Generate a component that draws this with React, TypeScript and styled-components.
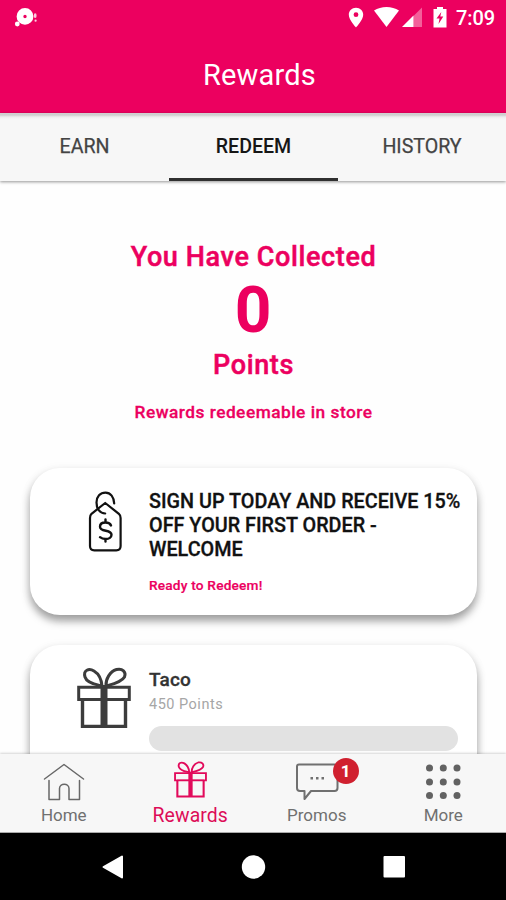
import React from 'react';
import styled, { createGlobalStyle } from 'styled-components';

const PINK = '#ec005f';

const GlobalStyle = createGlobalStyle`
  * { box-sizing: border-box; }
  body { margin: 0; background: #fff; font-family: Roboto, 'Liberation Sans', sans-serif; }
`;

const Screen = styled.div`
  width: 506px;
  height: 900px;
  display: flex;
  flex-direction: column;
  overflow: hidden;
  background: #fefefe;
`;

const Header = styled.header`
  flex: 0 0 113px;
  background: ${PINK};
  color: #fff;
`;

const StatusBar = styled.div`
  height: 36px;
  display: flex;
  justify-content: space-between;
`;

const StatusGroup = styled.div`
  display: flex;
  align-items: center;
`;

const Clock = styled.span`
  width: 50px;
  font-size: 20px;
  font-weight: 500;
  line-height: 37px;
  letter-spacing: -0.1px;
`;

const Title = styled.h1`
  margin: 0;
  padding-left: 13px;
  height: 77px;
  line-height: 78px;
  text-align: center;
  font-size: 29px;
  font-weight: 400;
  letter-spacing: 0.2px;
`;

const Tabs = styled.nav`
  flex: 0 0 68px;
  display: grid;
  grid-template-columns: 169px 169px 168px;
  background: linear-gradient(#d2d2d2 0, #cfcfcf 2px, #eee 4px, #f7f7f7 6px);
  box-shadow: 0 1px 3px rgba(0, 0, 0, 0.42);
  z-index: 1;
`;

const Tab = styled.div<{ $active?: boolean }>`
  height: 68px;
  text-align: center;
  line-height: 67px;
  font-size: 19.6px;
  font-weight: ${(p) => (p.$active ? 500 : 400)};
  color: ${(p) => (p.$active ? '#161616' : '#444')};
  -webkit-text-stroke: ${(p) => (p.$active ? '0' : '0.25px #444')};
  border-bottom: 3px solid ${(p) => (p.$active ? '#303030' : 'transparent')};
`;

const Content = styled.main`
  flex: 1;
  min-height: 0;
  overflow: hidden;
`;

const Summary = styled.section`
  height: 287px;
  padding-top: 59px;
  display: flex;
  flex-direction: column;
  align-items: center;
  color: ${PINK};
`;

const SummaryLine = styled.div`
  height: 34px;
  padding-left: 1px;
  line-height: 34px;
  font-size: 27px;
  font-weight: 500;
  letter-spacing: 0.62px;
  -webkit-text-stroke: 0.5px ${PINK};
`;

const Score = styled.div`
  height: 74px;
  line-height: 73px;
  font-size: 64px;
  font-weight: 700;
`;

const Hint = styled.div`
  margin-top: 13px;
  height: 34px;
  padding-left: 1px;
  line-height: 35px;
  font-size: 17.3px;
  font-weight: 500;
  letter-spacing: 0.5px;
  -webkit-text-stroke: 0.3px ${PINK};
`;

const Card = styled.article`
  display: flex;
  height: 147px;
  margin: 0 29px 30px 30px;
  border-radius: 30px;
  background: #fff;
  box-shadow: 0 6px 9px rgba(0, 0, 0, 0.36), 0 2px 12px rgba(0, 0, 0, 0.06);
`;

const CardIcon = styled.div`
  flex: 0 0 119px;
  padding: 22px 0 0 47px;
`;

const CardBody = styled.div`
  flex: 1;
  padding-top: 22px;
`;

const OfferTitle = styled.h2`
  margin: 0;
  width: 316px;
  font-size: 19.8px;
  line-height: 24px;
  font-weight: 500;
  color: #111;
  -webkit-text-stroke: 0.3px #111;
`;

const Ready = styled.div`
  margin-top: 13px;
  line-height: 20px;
  font-size: 13.7px;
  letter-spacing: 0.18px;
  font-weight: 500;
  color: ${PINK};
  -webkit-text-stroke: 0.2px ${PINK};
`;

const RewardTitle = styled.h2`
  margin: 0;
  font-size: 19px;
  line-height: 25px;
  font-weight: 500;
  color: #333;
  letter-spacing: 0.2px;
  -webkit-text-stroke: 0.3px #333;
`;

const Cost = styled.div`
  margin-top: 2px;
  line-height: 21px;
  font-size: 14.5px;
  letter-spacing: 0.5px;
  color: #a6a6a6;
`;

const Progress = styled.div`
  margin-top: 11px;
  width: 309px;
  height: 25px;
  border-radius: 13px;
  background: #e2e2e2;
`;

const BottomNav = styled.nav`
  flex: 0 0 79px;
  display: grid;
  grid-template-columns: repeat(4, 1fr);
  background: #f7f7f7;
  border-bottom: 1px solid #aaa;
  box-shadow: 0 -1px 2px rgba(0, 0, 0, 0.16);
  z-index: 1;
`;

const NavItem = styled.div<{ $active?: boolean }>`
  display: flex;
  flex-direction: column;
  align-items: center;
  padding-left: 1px;
  color: ${(p) => (p.$active ? '#dd0c58' : '#707070')};
  font-size: ${(p) => (p.$active ? '19.4px' : '17px')};
  letter-spacing: ${(p) => (p.$active ? '0.1px' : '0')};
  line-height: 25px;
`;

const NavIcon = styled.div`
  position: relative;
  height: 49px;
  width: 80px;
`;

const Badge = styled.span`
  position: absolute;
  left: 56px;
  top: 4px;
  width: 26px;
  height: 26px;
  border-radius: 50%;
  background: #d0202f;
  color: #fff;
  text-align: center;
  font-size: 17px;
  font-weight: 700;
  line-height: 26px;
`;

const SystemBar = styled.footer`
  flex: 0 0 67px;
  background: #000;
  display: flex;
  align-items: center;
  justify-content: center;
  gap: 117px;
`;

const Drawing = styled.svg`
  display: block;
  overflow: visible;
`;

const NotificationMark = () => (
  <Drawing width="40" height="36" fill="#fff">
    <path fillRule="evenodd" d="M25 8a8.4 8.4 0 1 0 0 16.8A8.4 8.4 0 0 0 25 8zm0 6.8a1.7 1.7 0 1 1 0 3.4 1.7 1.7 0 0 1 0-3.4z" />
    <circle cx="17.3" cy="24" r="2.4" />
    <ellipse cx="35.2" cy="15.7" rx="1.4" ry="2.4" opacity="0.8" />
    <circle cx="35.6" cy="20.7" r="1.1" opacity="0.8" />
  </Drawing>
);

const StatusIcons = () => (
  <Drawing width="108" height="36" fill="#fff">
    <path fillRule="evenodd" d="M8 7.7c-4.1 0-7.2 3-7.2 7C.8 20 8 27.4 8 27.4s7.2-7.4 7.2-12.700c0-4-3.100-7-7.200-7zm0 4.600a2.400 2.400 0 1 1 0 4.800 2.400 2.400 0 0 1 0-4.800z" />
    <path d="M26 10.5C33 5.7 44 5.7 51 10.5L38.5 27z" />
    <path d="M74 7.500V27H54z" opacity="0.1" />
    <path d="M65.500 16 74 7.500V27h-8.500z" opacity="0.3" />
    <path d="M65.500 15.500V27H54z" />
    <path fillRule="evenodd" d="M85.500 9h3.500V7h6v2h3.500v18.500h-13zm7.800 3-4.800 6.500h3l-1 5.500 4.800-7.500h-3z" />
  </Drawing>
);

const TagIcon = () => (
  <Drawing width="60" height="64" fill="none" stroke="#111" strokeWidth="2.2" strokeLinecap="round" strokeLinejoin="round">
    <path d="M28.200 13 14.500 23.800Q13 25.200 13 28v28q0 4.300 4.300 4.300h22q4.300 0 4.300-4.300V28q0-2.800-1.700-4.200z" />
    <path d="M37.200 13.500C37 7 33.500 2.600 28.500 2.600c-5.300 0-9 4-9 9.900 0 6.500 3.500 10.800 8.700 11" />
    <path d="M34 35.500c-.8-2-2.800-3-5.500-3-3.300 0-5.500 1.700-5.500 4.200 0 5.600 11.500 2.600 11.500 8 0 2.500-2.500 4.300-5.700 4.300-2.500 0-4.300-.500-5.800-1.800M28.500 29.500v3M28.500 49v2.500" strokeWidth="2.400" />
  </Drawing>
);

interface GiftProps {
  width: number;
  height: number;
  color: string;
}

const GiftIcon = ({ width, height, color }: GiftProps) => (
  <Drawing width={width} height={height} viewBox="0 0 54 62" preserveAspectRatio="none" fill="none" stroke={color}>
    <path d="M5.500 33v26.400h43V33" strokeWidth="3.400" />
    <path d="M1.700 20.200h50.600v12.400H1.700z" strokeWidth="3" />
    <path d="M5 31.500h44" strokeWidth="1.200" opacity="0.6" />
    <path d="M27 18v41" strokeWidth="7" />
    <path d="M25 19C22 18 10 17 8 10 6 3 12 1 17 4c5 3 7.500 9 8 15z" strokeWidth="3" />
    <path d="M29 19c3-1 15-3 18.500-9 2-5-2-9-8-7.500C33 4.500 28.500 12 29 19z" strokeWidth="3" />
  </Drawing>
);

const HomeIcon = () => (
  <Drawing width="80" height="49" fill="none" stroke="#686868" strokeWidth="1.500" strokeLinecap="round" strokeLinejoin="round">
    <path d="M20.500 25 40 10.500 59.500 25" />
    <path d="M25 26.500v19h10.500V34.500c0-5.700 9.500-5.700 9.500 0v11h10.500v-19" />
  </Drawing>
);

const ChatIcon = () => (
  <Drawing width="80" height="49" fill="none" stroke="#707070" strokeWidth="2" strokeLinejoin="round">
    <path d="M22 10.500h35.500q3 0 3 3v20.500q0 3-3 3H34l-6.500 8V37H23q-3 0-3-3V12.500q0-2 2-2z" />
    <path d="M33.500 24.300h2.500M39 24.300h2.500M44.500 24.300h2.500" strokeWidth="2.500" />
  </Drawing>
);

const MoreIcon = () => (
  <Drawing width="80" height="49" fill="#626262">
    {[14, 28, 41.5].map((y) => [26.5, 40.3, 54].map((x) => <circle key={`${x}-${y}`} cx={x} cy={y} r="3.500" />))}
  </Drawing>
);

const GiftSlot = styled.div`
  display: flex;
  justify-content: center;
  padding-top: 7px;
`;

export default function App() {
  return (
    <>
      <GlobalStyle />
      <Screen>
        <Header>
          <StatusBar>
            <StatusGroup><NotificationMark /></StatusGroup>
            <StatusGroup>
              <StatusIcons />
              <Clock>7:09</Clock>
            </StatusGroup>
          </StatusBar>
          <Title>Rewards</Title>
        </Header>
        <Tabs>
          <Tab>EARN</Tab>
          <Tab $active>REDEEM</Tab>
          <Tab>HISTORY</Tab>
        </Tabs>
        <Content>
          <Summary>
            <SummaryLine>You Have Collected</SummaryLine>
            <Score>0</Score>
            <SummaryLine>Points</SummaryLine>
            <Hint>Rewards redeemable in store</Hint>
          </Summary>
          <Card>
            <CardIcon><TagIcon /></CardIcon>
            <CardBody>
              <OfferTitle>SIGN UP TODAY AND RECEIVE 15% OFF YOUR FIRST ORDER - WELCOME</OfferTitle>
              <Ready>Ready to Redeem!</Ready>
            </CardBody>
          </Card>
          <Card>
            <CardIcon><GiftIcon width={54} height={62} color="#3c3c3c" /></CardIcon>
            <CardBody>
              <RewardTitle>Taco</RewardTitle>
              <Cost>450 Points</Cost>
              <Progress />
            </CardBody>
          </Card>
        </Content>
        <BottomNav>
          <NavItem>
            <NavIcon><HomeIcon /></NavIcon>
            Home
          </NavItem>
          <NavItem $active>
            <NavIcon><GiftSlot><GiftIcon width={33} height={37} color="#e20a5b" /></GiftSlot></NavIcon>
            Rewards
          </NavItem>
          <NavItem>
            <NavIcon><ChatIcon /><Badge>1</Badge></NavIcon>
            Promos
          </NavItem>
          <NavItem>
            <NavIcon><MoreIcon /></NavIcon>
            More
          </NavItem>
        </BottomNav>
        <SystemBar>
          <Drawing width="24" height="26" fill="#fff"><path d="M22 2.500v21L3.500 13z" stroke="#fff" strokeWidth="2" strokeLinejoin="round" /></Drawing>
          <Drawing width="24" height="24" fill="#fff"><circle cx="12.500" cy="12" r="11.700" /></Drawing>
          <Drawing width="24" height="24" fill="#fff"><rect x="1.500" y="1" width="21.500" height="21.500" rx="1" /></Drawing>
        </SystemBar>
      </Screen>
    </>
  );
}
